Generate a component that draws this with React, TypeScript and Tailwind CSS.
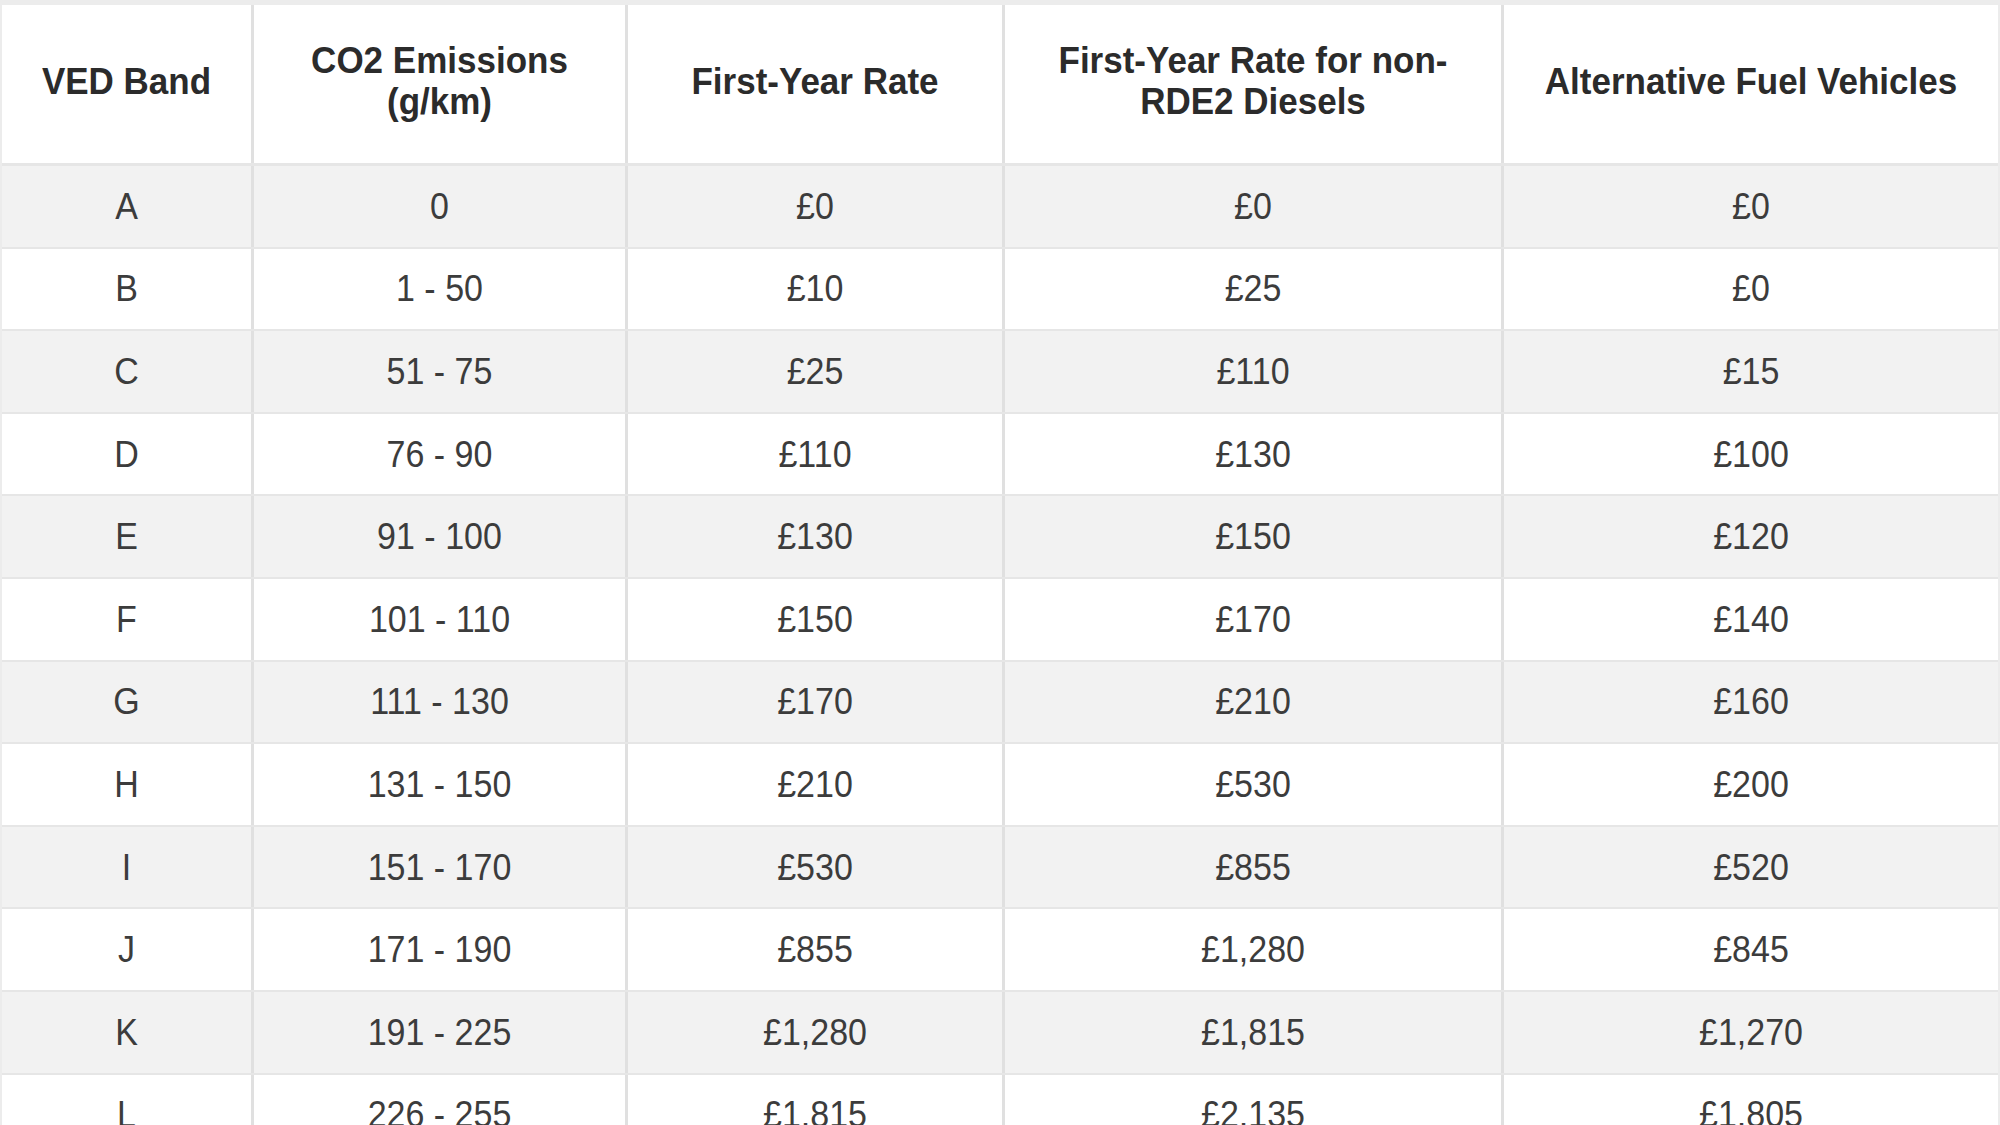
import React from 'react';

const rows = [
	['A', '0', '£0', '£0', '£0'],
	['B', '1 - 50', '£10', '£25', '£0'],
	['C', '51 - 75', '£25', '£110', '£15'],
	['D', '76 - 90', '£110', '£130', '£100'],
	['E', '91 - 100', '£130', '£150', '£120'],
	['F', '101 - 110', '£150', '£170', '£140'],
	['G', '111 - 130', '£170', '£210', '£160'],
	['H', '131 - 150', '£210', '£530', '£200'],
	['I', '151 - 170', '£530', '£855', '£520'],
	['J', '171 - 190', '£855', '£1,280', '£845'],
	['K', '191 - 225', '£1,280', '£1,815', '£1,270'],
	['L', '226 - 255', '£1,815', '£2,135', '£1,805']
];

const headers = [
	'VED Band',
	<>CO2 Emissions<br/>(g/km)</>,
	'First-Year Rate',
	<>First-Year Rate for non-<br/>RDE2 Diesels</>,
	'Alternative Fuel Vehicles'
];

const grid = 'grid grid-cols-[252px_374px_377px_499px_1fr]';

export default function App() {
	return (
		<div
			className="w-[2000px] h-[1125px] overflow-hidden bg-white pt-[5px] bg-[linear-gradient(#ececec,#ececec)] bg-no-repeat bg-[length:100%_5px]"
			style={{fontFamily: '"Liberation Sans", Arial, sans-serif'}}
		>
			<div className="border-x-2 border-[#ececec] bg-white">
				<div className={`${grid} h-[161px] border-b-[3px] border-[#e6e6e6]`}>
					{headers.map((h, i) => (
						<div
							key={i}
							className={`flex items-center justify-center text-center pb-[8px] text-[35px] leading-[39px] font-bold text-[#2b2b2b] ${i < 4 ? 'border-r-[3px] border-[#e0e0e0]' : ''}`}
						>
							<span className="scale-y-[1.07]">{h}</span>
						</div>
					))}
				</div>

				{rows.map((r, ri) => (
					<div
						key={r[0]}
						className={`${grid} h-[82.6px] border-b-[2px] border-[#e6e6e6] ${ri % 2 === 0 ? 'bg-[#f2f2f2]' : 'bg-white'}`}
					>
						{r.map((c, ci) => (
							<div
								key={ci}
								className={`flex items-center justify-center text-[34px] text-[#3c3c3c] ${ci < 4 ? 'border-r-[3px] border-[#e0e0e0]' : ''}`}
							>
								<span className="scale-y-[1.07]">{c}</span>
							</div>
						))}
					</div>
				))}
			</div>
		</div>
	);
}
